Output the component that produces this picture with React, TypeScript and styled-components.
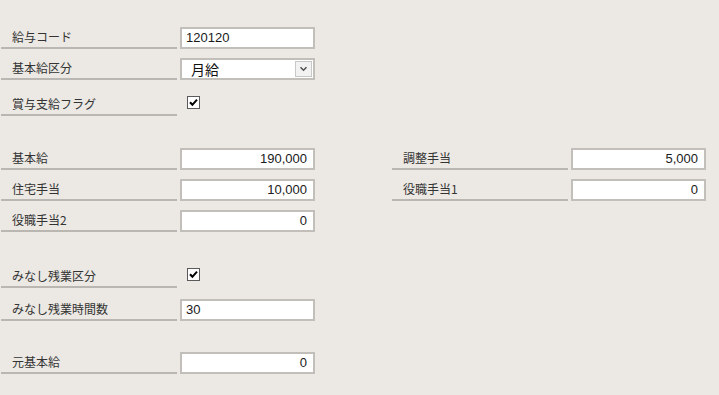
import React from "react";
import styled, { createGlobalStyle } from "styled-components";

const Global = createGlobalStyle`
  html, body { margin: 0; padding: 0; background: #ece9e4; }
  body { font-family: "Noto Sans CJK JP", "Liberation Sans", sans-serif; }
`;

const Page = styled.div`
  width: 719px;
  height: 395px;
  padding-top: 27px;
  box-sizing: border-box;
  background: #ece9e4;
  display: flex;
  flex-direction: column;
`;

const Row = styled.div<{ $top: number }>`
  display: flex;
  align-items: flex-start;
  margin-top: ${(p) => p.$top}px;
  height: 22px;
`;

const Pair = styled.div<{ $left: number }>`
  display: flex;
  align-items: flex-start;
  gap: 3px;
  margin-left: ${(p) => p.$left}px;
`;

const Label = styled.div`
  width: 176px;
  height: 22px;
  box-sizing: border-box;
  border-bottom: 2px solid #bab7b2;
  padding-left: 11px;
  font-size: 12px;
  line-height: 20px;
  color: #333;
  white-space: nowrap;
`;

const Field = styled.div<{ $align?: "left" | "right" }>`
  width: 135px;
  height: 22px;
  box-sizing: border-box;
  border: 2px solid #c2bfba;
  background: #ffffff;
  font-family: "Liberation Sans", Arial, sans-serif;
  font-size: 13px;
  line-height: 18px;
  color: #1a1a1a;
  padding: 0 6px 0 4px;
  text-align: ${(p) => (p.$align === "right" ? "right" : "left")};
`;

const Select = styled.div`
  width: 135px;
  height: 22px;
  box-sizing: border-box;
  border: 2px solid #c2bfba;
  background: #ffffff;
  display: flex;
  align-items: center;
  justify-content: space-between;
  padding: 0 1px 0 9px;
  font-size: 14px;
  color: #111;
`;

const DropButton = styled.div`
  width: 17px;
  height: 16px;
  box-sizing: border-box;
  border: 1px solid #c8c8c8;
  background: #f2f2f2;
  display: flex;
  align-items: center;
  justify-content: center;
`;

const CheckCell = styled.div`
  width: 135px;
  padding: 2px 0 0 7px;
  box-sizing: border-box;
`;

const CheckBox = styled.div`
  width: 13px;
  height: 13px;
  box-sizing: border-box;
  border: 1px solid #5a5a5a;
  background: #fff;
  display: flex;
  align-items: center;
  justify-content: center;
`;

const Check = () => (
  <CheckBox>
    <svg width="9" height="9" viewBox="0 0 9 9">
      <path d="M1 4.2 L3.4 6.8 L8 1.6" stroke="#000" strokeWidth="2" fill="none" />
    </svg>
  </CheckBox>
);

const Chevron = () => (
  <svg width="9" height="6" viewBox="0 0 9 6">
    <path d="M1.5 1.2 L4.5 4.2 L7.5 1.2" stroke="#555" strokeWidth="1.6" fill="none" />
  </svg>
);

export default function App() {
  return (
    <>
      <Global />
      <Page>
        <Row $top={0}>
          <Pair $left={1}>
            <Label>給与コード</Label>
            <Field>120120</Field>
          </Pair>
        </Row>
        <Row $top={9}>
          <Pair $left={1}>
            <Label>基本給区分</Label>
            <Select>
              <span>月給</span>
              <DropButton>
                <Chevron />
              </DropButton>
            </Select>
          </Pair>
        </Row>
        <Row $top={14}>
          <Pair $left={1}>
            <Label>賞与支給フラグ</Label>
            <CheckCell>
              <Check />
            </CheckCell>
          </Pair>
        </Row>

        <Row $top={32}>
          <Pair $left={1}>
            <Label>基本給</Label>
            <Field $align="right">190,000</Field>
          </Pair>
          <Pair $left={77}>
            <Label>調整手当</Label>
            <Field $align="right">5,000</Field>
          </Pair>
        </Row>
        <Row $top={9}>
          <Pair $left={1}>
            <Label>住宅手当</Label>
            <Field $align="right">10,000</Field>
          </Pair>
          <Pair $left={77}>
            <Label>役職手当1</Label>
            <Field $align="right">0</Field>
          </Pair>
        </Row>
        <Row $top={9}>
          <Pair $left={1}>
            <Label>役職手当2</Label>
            <Field $align="right">0</Field>
          </Pair>
        </Row>

        <Row $top={34}>
          <Pair $left={1}>
            <Label>みなし残業区分</Label>
            <CheckCell>
              <Check />
            </CheckCell>
          </Pair>
        </Row>
        <Row $top={11}>
          <Pair $left={1}>
            <Label>みなし残業時間数</Label>
            <Field>30</Field>
          </Pair>
        </Row>

        <Row $top={31}>
          <Pair $left={1}>
            <Label>元基本給</Label>
            <Field $align="right">0</Field>
          </Pair>
        </Row>
      </Page>
    </>
  );
}
